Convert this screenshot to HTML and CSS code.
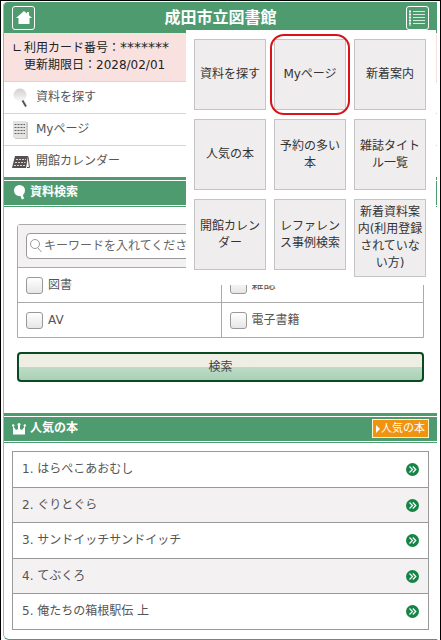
FILE: index.html
```html
<!DOCTYPE html>
<html lang="ja">
<head>
    <meta charset="UTF-8">
    <meta name="viewport" content="width=device-width, initial-scale=1.0">
    <title>成田市立図書館</title>
    <link rel="stylesheet" href="styles.css">
</head>
<body>
    <div class="page">
        <header class="header">
            <a href="#" class="header-btn" aria-label="ホーム">
                <svg width="16" height="14" viewBox="0 0 16 14"><path fill="#fff" d="M8 0 L11 2.6 V1 H13 V4.3 L16 7 H13.5 V13 H2.5 V7 H0 Z"/></svg>
            </a>
            <h1>成田市立図書館</h1>
            <button type="button" class="header-btn" aria-label="メニュー">
                <svg width="16" height="16" viewBox="0 0 16 16">
                    <path stroke="#fff" stroke-width="2" stroke-dasharray="2 1" d="M1 0.5 V16"/>
                    <path stroke="#d5e9dd" d="M4 1.5 H16 M4 4.5 H16 M4 7.5 H16 M4 10.5 H16 M4 13.5 H16"/>
                </svg>
            </button>
        </header>

        <!-- global menu -->
        <nav class="menu">
            <a href="#">資料を探す</a>
            <a href="#" class="current">Myページ</a>
            <a href="#">新着案内</a>
            <a href="#">人気の本</a>
            <a href="#">予約の多い本</a>
            <a href="#">雑誌タイトル一覧</a>
            <a href="#">開館カレンダー</a>
            <a href="#">レファレンス事例検索</a>
            <a href="#">新着資料案内(利用登録されていない方)</a>
        </nav>

        <div class="notice">
            <p><span class="mark">∟</span>利用カード番号：<span class="masked">*******</span></p>
            <p class="expire">更新期限日：2028/02/01</p>
        </div>

        <ul class="links">
            <li><a href="#">
                <svg width="18" height="20" viewBox="0 0 18 20">
                    <defs><linearGradient id="lens" x2="0" y2="1"><stop offset="0" stop-color="#d2cece"/><stop offset="1" stop-color="#faf9f9"/></linearGradient></defs>
                    <circle cx="8" cy="7" r="6.5" fill="url(#lens)"/>
                    <path stroke="#555" stroke-width="2" d="M10.5 12.5 L14 18.5"/>
                </svg>資料を探す</a></li>
            <li><a href="#">
                <svg width="18" height="20" viewBox="0 0 18 20">
                    <path fill="#cfcaca" d="M3 3 L16 2 V19 H3Z"/>
                    <path fill="#e6e3e3" d="M1 1 H14 V18 H1Z"/>
                    <path stroke="#666" stroke-dasharray="2 1" d="M2.5 4.5 H13 M2.5 7.5 H13 M2.5 10.5 H13 M2.5 13.5 H13"/>
                </svg>Myページ</a></li>
            <li><a href="#">
                <svg width="18" height="20" viewBox="0 0 18 20">
                    <path fill="#584f50" d="M3 4 H16 L14 16 H0Z"/>
                    <path stroke="#584f50" fill="none" d="M16 4.5 L17.5 15.5 H15"/>
                    <path stroke="#d8d4d4" stroke-dasharray="2 1" d="M4 7.5 H14 M3 10.5 H13.5 M2 13.5 H13"/>
                </svg>開館カレンダー</a></li>
        </ul>

        <section>
            <div class="bar">
                <svg width="14" height="15" viewBox="0 0 14 15">
                    <circle cx="7.5" cy="5.5" r="5.5" fill="#fff"/>
                    <path stroke="#fff" stroke-width="2.5" d="M9 9 L11 14"/>
                </svg>
                <h2>資料検索</h2>
            </div>
            <form class="search">
                <div class="box">
                    <div class="keyword">
                        <svg width="12" height="14" viewBox="0 0 12 14"><circle cx="5" cy="5" r="4.5" fill="none" stroke="#999"/><path stroke="#999" d="M8 9 L11.5 13"/></svg>
                        <input type="text" aria-label="キーワード" placeholder="キーワードを入れてください">
                    </div>
                    <div class="types">
                        <label><input type="checkbox">図書</label>
                        <label><input type="checkbox">雑誌</label>
                        <label><input type="checkbox">AV</label>
                        <label><input type="checkbox">電子書籍</label>
                    </div>
                </div>
                <button type="button" class="search-btn">検索</button>
            </form>
        </section>

        <section>
            <div class="bar">
                <svg width="14" height="12" viewBox="0 0 14 12">
                    <path fill="#fff" d="M1 3 L4 7 L6 6 V2 H8 V6 L10 7 L13 3 V11.5 H1Z"/>
                    <circle cx="1.2" cy="2.5" r="1.2" fill="#fff"/><circle cx="7" cy="1.5" r="1.5" fill="#fff"/><circle cx="12.8" cy="2.5" r="1.2" fill="#fff"/>
                </svg>
                <h2>人気の本</h2>
                <a href="#" class="more"><svg width="4" height="8" viewBox="0 0 4 8"><path fill="#fff" d="M0 0 L4 4 L0 8Z"/></svg>人気の本</a>
            </div>
            <svg class="defs" width="0" height="0"><symbol id="go" viewBox="0 0 13 13">
                <circle cx="6.5" cy="6.5" r="6.5" fill="#148545"/>
                <path fill="none" stroke="#fff" stroke-width="1.2" d="M3.5 3.5 L6.5 6.5 L3.5 9.5 M6.8 3.5 L9.8 6.5 L6.8 9.5"/>
            </symbol></svg>
            <ol class="books">
                <li><a href="#">1. はらぺこあおむし<svg width="13" height="13"><use href="#go"/></svg></a></li>
                <li><a href="#">2. ぐりとぐら<svg width="13" height="13"><use href="#go"/></svg></a></li>
                <li><a href="#">3. サンドイッチサンドイッチ<svg width="13" height="13"><use href="#go"/></svg></a></li>
                <li><a href="#">4. てぶくろ<svg width="13" height="13"><use href="#go"/></svg></a></li>
                <li><a href="#">5. 俺たちの箱根駅伝 上<svg width="13" height="13"><use href="#go"/></svg></a></li>
            </ol>
        </section>
    </div>
</body>
</html>
```
FILE: styles.css
```css
* {
    box-sizing: border-box;
}
body {
    margin: 0;
    padding: 1px 2px 0;
    border: 1px solid #000;
    background: #fff;
    font-family: "DejaVu Sans", "Noto Sans CJK JP", sans-serif;
    font-size: 12px;
    line-height: 17px;
    color: #555;
}
h1, h2, p, ul, ol {
    margin: 0;
    padding: 0;
}
ul, ol {
    list-style: none;
}
a {
    color: inherit;
    text-decoration: none;
}
button, input {
    font: inherit;
    color: inherit;
}
.page {
    position: relative;
    border-left: 1px solid #b5adad;
    border-right: 1px solid #fff;
    border-bottom: 1px solid #4d9b6f;
    border-radius: 4px 0 0 6px;
}

.header {
    display: flex;
    justify-content: space-between;
    align-items: center;
    height: 31px;
    padding: 0 8px;
    background: #4d9b6f;
    border-radius: 4px 0 0 0;
}
.header h1 {
    font-size: 16px;
    line-height: 24px;
    color: #fff;
}
.header-btn {
    display: flex;
    align-items: center;
    justify-content: center;
    width: 23px;
    height: 24px;
    padding: 0;
    background: none;
    border: 1px solid #fff;
    border-radius: 3px;
}

.menu {
    position: absolute;
    top: 28px;
    right: 1px;
    z-index: 1;
    display: grid;
    grid-template-columns: repeat(3, 72px);
    grid-auto-rows: minmax(71px, auto);
    align-items: start;
    gap: 9px 8px;
    padding: 9px 10px 8px 8px;
    background: #fff;
}
.menu a {
    position: relative;
    display: flex;
    align-items: center;
    justify-content: center;
    min-height: 71px;
    padding: 4px 2px;
    background: #f0edee;
    border: 1px solid #c4c4c4;
    text-align: center;
    color: #333;
}
.menu .current::after {
    content: "";
    position: absolute;
    inset: -6px -5px;
    border: 2px solid #d81318;
    border-radius: 14px;
}

.notice {
    padding: 6px 8px 7px;
    background: #f9e1e0;
    color: #222;
}
.mark {
    display: inline-block;
    width: 12px;
}
.masked {
    font-size: 14px;
}
.expire {
    padding-left: 12px;
}

.links a {
    display: flex;
    align-items: center;
    gap: 6px;
    height: 32px;
    padding: 0 8px;
    border-top: 1px solid #d5d5d5;
}

.bar {
    display: flex;
    align-items: center;
    gap: 4px;
    height: 31px;
    padding: 0 8px;
    background: linear-gradient(#4d9b6f 3px, #fff 3px, #fff 4px, #4d9b6f 4px, #4d9b6f 28px, #fff 28px, #fff 29px, #4d9b6f 29px, #4d9b6f 30px, #fff 30px);
}
.bar h2 {
    flex: 1;
    font-size: 12px;
    color: #fff;
}
.more {
    display: flex;
    align-items: center;
    gap: 1px;
    padding: 0 3px;
    background: #ef9310;
    border: 1px solid #fff3cc;
    font-size: 11px;
    color: #fff;
}

.search {
    padding: 16px 13px 31px;
}
.box {
    border: 1px solid #aaa;
    border-radius: 3px 3px 0 0;
}
.keyword {
    display: flex;
    align-items: center;
    height: 42px;
    padding: 0 8px;
    background: #f3f1f1;
}
.keyword svg {
    position: relative;
    margin: 0 -16px 0 4px;
}
.keyword input {
    flex: 1;
    min-width: 0;
    height: 26px;
    padding: 0 4px 0 17px;
    border: 1px solid #999;
    border-radius: 4px;
    background: #fff;
}
.keyword input::placeholder {
    color: #666;
}
.types {
    display: grid;
    grid-template-columns: 1fr 1fr;
}
.types label {
    display: flex;
    align-items: center;
    gap: 5px;
    height: 35px;
    padding: 0 8px;
    border-top: 1px solid #aaa;
}
.types label:nth-child(even) {
    border-left: 1px solid #aaa;
}
.types input {
    appearance: none;
    width: 17px;
    height: 17px;
    margin: 0;
    border: 1px solid #999;
    border-radius: 3px;
    background: linear-gradient(#fff, #e8e5e5);
}
.search-btn {
    display: block;
    width: 100%;
    height: 30px;
    margin-top: 14px;
    padding: 0;
    border: 2px solid #0a4a20;
    border-radius: 4px;
    background: linear-gradient(#eeeee4 50%, #bddcc7 50%, #abd0b6);
    color: #444;
}

.defs {
    display: block;
}
.books {
    margin: 7px 8px 9px;
    border: 1px solid #999;
}
.books li {
    display: grid;
    height: 35px;
}
.books a {
    display: flex;
    align-items: center;
    justify-content: space-between;
    padding: 0 9px;
}
.books li + li {
    height: 36px;
    border-top: 1px solid #999;
}
.books li:nth-child(even) {
    height: 35px;
    background: #f3f1f1;
}
```
